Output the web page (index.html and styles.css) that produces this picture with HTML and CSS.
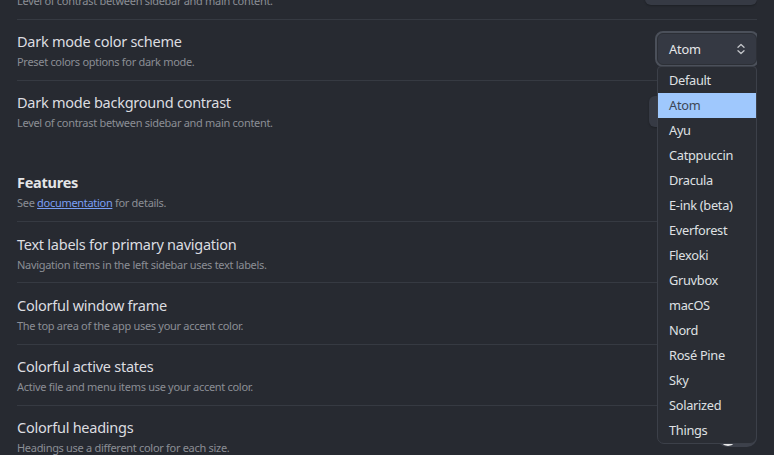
FILE: index.html
```html
<!DOCTYPE html>
<html lang="en">
<head>
<meta charset="utf-8">
<title>Appearance settings</title>
<link rel="stylesheet" href="styles.css">
</head>
<body>
<div class="page">
  <div class="settings">
    <div class="item first">
      <div class="info">
        <div class="name">Light mode background contrast</div>
        <div class="desc">Level of contrast between sidebar and main content.</div>
      </div>
      <div class="control"><div class="dropdown w112"></div></div>
    </div>

    <div class="item">
      <div class="info">
        <div class="name">Dark mode color scheme</div>
        <div class="desc">Preset colors options for dark mode.</div>
      </div>
      <div class="control">
        <div class="select-wrap">
          <div class="select focused">
            <span>Atom</span>
            <svg class="updown" width="10" height="12" viewBox="0 0 10 12" fill="none" stroke="currentColor" stroke-width="1.3" stroke-linecap="round" stroke-linejoin="round"><path d="M2 4.2 5 1.5 8 4.2"/><path d="M2 7.8 5 10.5 8 7.8"/></svg>
          </div>
          <ul class="menu">
            <li>Default</li>
            <li class="active">Atom</li>
            <li>Ayu</li>
            <li>Catppuccin</li>
            <li>Dracula</li>
            <li>E-ink (beta)</li>
            <li>Everforest</li>
            <li>Flexoki</li>
            <li>Gruvbox</li>
            <li>macOS</li>
            <li>Nord</li>
            <li>Rosé Pine</li>
            <li>Sky</li>
            <li>Solarized</li>
            <li>Things</li>
          </ul>
        </div>
      </div>
    </div>

    <div class="item">
      <div class="info">
        <div class="name">Dark mode background contrast</div>
        <div class="desc">Level of contrast between sidebar and main content.</div>
      </div>
      <div class="control"><div class="dropdown w108"></div></div>
    </div>

    <div class="item heading">
      <div class="info">
        <div class="name">Features</div>
        <div class="desc">See <a href="#">documentation</a> for details.</div>
      </div>
    </div>

    <div class="item feature">
      <div class="info">
        <div class="name">Text labels for primary navigation</div>
        <div class="desc">Navigation items in the left sidebar uses text labels.</div>
      </div>
      <div class="control"><div class="toggle"><span class="knob"></span></div></div>
    </div>

    <div class="item feature">
      <div class="info">
        <div class="name">Colorful window frame</div>
        <div class="desc">The top area of the app uses your accent color.</div>
      </div>
      <div class="control"><div class="toggle"><span class="knob"></span></div></div>
    </div>

    <div class="item feature">
      <div class="info">
        <div class="name">Colorful active states</div>
        <div class="desc">Active file and menu items use your accent color.</div>
      </div>
      <div class="control"><div class="toggle"><span class="knob"></span></div></div>
    </div>

    <div class="item feature">
      <div class="info">
        <div class="name">Colorful headings</div>
        <div class="desc">Headings use a different color for each size.</div>
      </div>
      <div class="control"><div class="toggle"><span class="knob"></span></div></div>
    </div>
  </div>
</div>
</body>
</html>
```
FILE: styles.css
```css
html, body {
  margin: 0;
  padding: 0;
  background: #272a31;
  overflow: hidden;
}

body {
  font-family: "Noto Sans", "Open Sans", sans-serif;
  color: #dadbdd;
}

.page {
  width: 757px;
  height: 455px;
  overflow: hidden;
}

.settings {
  margin-top: -42px;
  padding-left: 17px;
}

.item {
  display: flex;
  align-items: center;
  justify-content: space-between;
  border-top: 1px solid #363a42;
  padding: 11px 0 10px;
  min-height: 39px;
}

.item.first {
  border-top: none;
  padding-top: 12px;
}

.item.feature {
  padding-top: 11.5px;
  padding-bottom: 9.84px;
}

.info {
  display: flex;
  flex-direction: column;
  gap: 2px;
}

.name {
  font-size: 14.5px;
  line-height: 20px;
  letter-spacing: -0.25px;
  color: #dcdde0;
}

.desc {
  font-size: 11px;
  line-height: 17px;
  letter-spacing: -0.3px;
  color: #8b8e95;
}

.desc a {
  color: #7a9ff5;
  text-decoration: underline;
}

.item.heading {
  border-top: none;
  padding-top: 31px;
}

.item.heading .name {
  font-weight: 700;
  color: #e4e5e7;
}

.control {
  display: flex;
  align-items: center;
}

.dropdown {
  height: 31px;
  border-radius: 6px;
  background: #363a44;
  box-shadow: 0 1px 2px rgba(0, 0, 0, 0.25);
}

.w112 { width: 112px; }
.w108 { width: 108px; }

.select-wrap {
  position: relative;
  width: 100px;
  margin-bottom: 4px;
}

.select {
  display: flex;
  align-items: center;
  justify-content: space-between;
  box-sizing: border-box;
  height: 32px;
  padding: 0 10px 0 11px;
  border-radius: 6px;
  background: #353943;
  border: 1px solid #2c2f36;
  font-size: 12.8px;
  letter-spacing: -0.2px;
  color: #e6e7e9;
}

.select.focused {
  box-shadow: 0 0 0 2px #4b505a;
}

.updown {
  color: #c4c6ca;
}

.menu {
  position: absolute;
  left: 0;
  top: 33px;
  width: 100px;
  box-sizing: border-box;
  margin: 0;
  padding: 1px 0 0;
  list-style: none;
  background: #2a2d34;
  border: 1px solid #3c4049;
  border-radius: 4px 4px 7px 7px;
  z-index: 5;
}

.menu li {
  height: 25px;
  line-height: 25px;
  padding-left: 11px;
  font-size: 12.8px;
  letter-spacing: -0.3px;
  color: #dfe0e3;
}

.menu li.active {
  background: #9fc8fd;
  color: #3d4656;
}

.toggle {
  position: relative;
  width: 40px;
  height: 20px;
  border-radius: 10px;
  background: #3d414b;
}

.knob {
  position: absolute;
  left: 2px;
  top: 1px;
  width: 18px;
  height: 18px;
  border-radius: 50%;
  background: #e8e8e8;
}
```
